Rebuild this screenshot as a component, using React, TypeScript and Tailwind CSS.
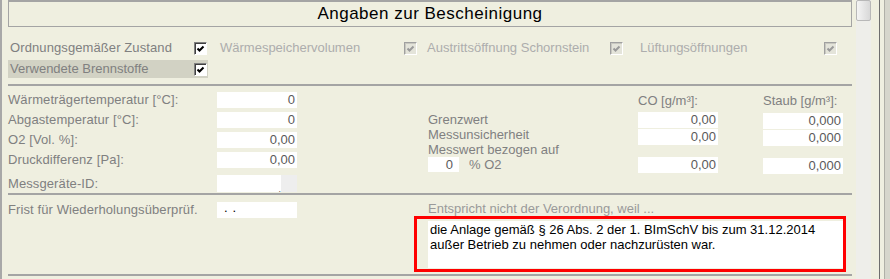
import { ReactNode } from 'react';

const font = { fontFamily: '"Liberation Sans", Arial, sans-serif' };

function Check({ disabled }: { disabled?: boolean }) {
  return (
    <div
      className={`w-[13px] h-[13px] shrink-0 border-t border-l border-r border-b ${
        disabled
          ? 'border-t-[#A0A0A0] border-l-[#A0A0A0] border-r-white border-b-white bg-[#E4E4DA]'
          : 'border-t-[#808080] border-l-[#808080] border-r-white border-b-white bg-white'
      }`}
    >
      <div
        className={`w-[11px] h-[11px] border-t border-l ${
          disabled ? 'border-[#C8C8C0]' : 'border-[#404040]'
        }`}
      >
        <svg width="10" height="10" viewBox="0 0 10 10" className="block">
          <path
            d="M1.5 4.5 L3.5 6.5 L7.5 2.5"
            fill="none"
            stroke={disabled ? '#9A9A9A' : '#000'}
            strokeWidth="2"
          />
        </svg>
      </div>
    </div>
  );
}

function Field({ value, className = '' }: { value: string; className?: string }) {
  return (
    <div className={`w-20 h-4 bg-white text-right pr-[2px] text-[13px] leading-4 text-[#5A5A5A] ${className}`}>
      {value}
    </div>
  );
}

function Row({ label, children, className = '' }: { label: string; children: ReactNode; className?: string }) {
  return (
    <div className={`flex items-center h-4 ${className}`}>
      <div className="w-[209px] text-[#808080] tracking-[0.1px]">{label}</div>
      {children}
    </div>
  );
}

function Sep() {
  return <div className="h-[2px] bg-[#A4A4A4] mr-[4px]" />;
}

export default function App() {
  return (
    <div className="w-[890px] h-[279px] bg-[#EFEFE0] flex overflow-hidden text-[13px]" style={font}>
      {/* Main form */}
      <div className="w-[856px] h-full border-l-2 border-[#A8A8A8] pl-[6px] flex flex-col">
        {/* Title */}
        <div className="h-[27px] mr-[4px] border border-t-2 border-[#A4A4A4] flex items-center justify-center text-[17px] tracking-[0.5px] text-black">
          Angaben zur Bescheinigung
        </div>

        {/* Checkboxes */}
        <div className="h-[57px] pt-3 flex flex-col gap-[3px]">
          <div className="flex items-center h-[18px]">
            <div className="w-[200px] flex items-center justify-between pl-[2px] pr-px text-[#808080] tracking-[0.1px]">
              <span>Ordnungsgemäßer Zustand</span>
              <Check />
            </div>
            <div className="w-[198px] ml-3 flex items-center justify-between pr-px text-[#ADADAD]">
              <span>Wärmespeichervolumen</span>
              <Check disabled />
            </div>
            <div className="w-[197px] ml-[9px] flex items-center justify-between pr-px text-[#ADADAD]">
              <span>Austrittsöffnung Schornstein</span>
              <Check disabled />
            </div>
            <div className="w-[198px] ml-4 flex items-center justify-between pr-px text-[#ADADAD]">
              <span>Lüftungsöffnungen</span>
              <Check disabled />
            </div>
          </div>
          <div className="w-[200px] h-[18px] bg-[#D2D2C4] flex items-center justify-between pl-[2px] pr-px text-[#808080]">
            <span>Verwendete Brennstoffe</span>
            <Check />
          </div>
        </div>
        <Sep />

        {/* Measurements */}
        <div className="h-[107px] flex">
          <div className="w-[420px] pt-[6px] flex flex-col gap-1">
            <Row label="Wärmeträgertemperatur [°C]:">
              <Field value="0" />
            </Row>
            <Row label="Abgastemperatur [°C]:">
              <Field value="0" />
            </Row>
            <Row label="O2 [Vol. %]:">
              <Field value="0,00" />
            </Row>
            <Row label="Druckdifferenz [Pa]:">
              <Field value="0,00" />
            </Row>
            <Row label="Messgeräte-ID:" className="mt-[3px] h-[17px]">
              <div className="w-20 h-[17px] flex">
                <div className="w-16 bg-white relative">
                  <span className="absolute right-0 bottom-[-4px] text-[9px] text-[#606060]">.</span>
                </div>
                <div className="w-4 bg-[#EEEEEE]" />
              </div>
            </Row>
          </div>

          <div className="w-[210px] pt-[26px] flex flex-col text-[#808080] leading-[15px]">
            <div>Grenzwert</div>
            <div>Messunsicherheit</div>
            <div>Messwert bezogen auf</div>
            <div className="flex items-center gap-[10px]">
              <div className="w-[31px] h-[15px] bg-white text-right pr-[6px] text-[#5A5A5A]">0</div>
              <span>% O2</span>
            </div>
          </div>

          <div className="w-20 pt-[8px] flex flex-col">
            <div className="h-[14px] leading-[14px] text-[#808080]">CO [g/m³]:</div>
            <Field value="0,00" className="mt-[4px]" />
            <Field value="0,00" className="mt-px" />
            <Field value="0,00" className="mt-3" />
          </div>

          <div className="w-20 ml-[45px] pt-[8px] flex flex-col">
            <div className="h-[14px] leading-[14px] text-[#808080]">Staub [g/m³]:</div>
            <Field value="0,000" className="mt-[5px]" />
            <Field value="0,000" className="mt-px" />
            <Field value="0,000" className="mt-3" />
          </div>
        </div>
        <Sep />

        {/* Deadline and reason */}
        <div className="h-[79px] flex">
          <div className="w-[406px] pt-[7px]">
            <Row label="Frist für Wiederholungsüberprüf.">
              <div className="w-20 h-4 bg-white pl-[7px] text-[13px] leading-3 text-black tracking-[5px]">..</div>
            </Row>
          </div>
          <div className="w-[432px] pt-[7px] flex flex-col">
            <div className="h-[14px] leading-[14px] pl-[14px] text-[#9A9A9A]">Entspricht nicht der Verordnung, weil ...</div>
            <div className="h-[56px] border-[3px] border-[#FF0000] pl-[11px] pt-[2px] pb-[1px]">
              <div className="h-full bg-white pl-[2px] pt-px text-black leading-[15px]">
                die Anlage gemäß § 26 Abs. 2 der 1. BImSchV bis zum 31.12.2014
                <br />
                außer Betrieb zu nehmen oder nachzurüsten war.
              </div>
            </div>
          </div>
        </div>
        <Sep />
      </div>

      {/* Scrollbar */}
      <div className="w-[15px] h-full bg-[#EEEEEA] flex flex-col">
        <div className="h-[21px] rounded-[2px] border border-[#B8B8B8] bg-gradient-to-r from-[#F4F4F4] to-[#D8D8D8]" />
      </div>

      {/* Window frame */}
      <div className="w-2" />
      <div className="w-px bg-[#6E6E6E]" />
      <div className="w-1" />
      <div className="flex-1 bg-[#D6D6CC] border-l border-[#B0B0A8]" />
    </div>
  );
}
